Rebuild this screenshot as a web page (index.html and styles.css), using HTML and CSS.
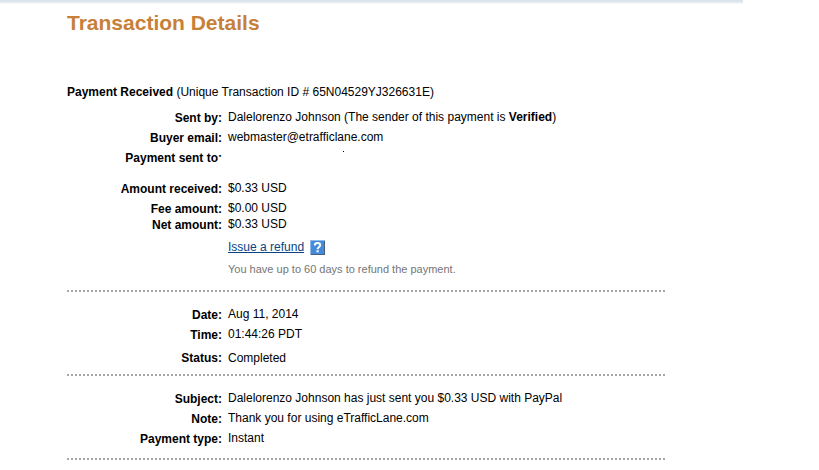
FILE: index.html
```html
<!DOCTYPE html>
<html lang="en">
<head>
<meta charset="utf-8">
<title>Transaction Details</title>
<link rel="stylesheet" href="styles.css">
</head>
<body>
<div class="page">
  <main class="content">
    <h1>Transaction Details</h1>
    <p class="summary"><strong>Payment Received</strong> (Unique Transaction ID # 65N04529YJ326631E)</p>

    <section class="block payment">
      <dl>
        <div class="row"><dt>Sent by:</dt><dd>Dalelorenzo Johnson (The sender of this payment is <strong>Verified</strong>)</dd></div>
        <div class="row"><dt>Buyer email:</dt><dd>webmaster@etrafficlane.com</dd></div>
        <div class="row redacted"><dt>Payment sent to:</dt><dd><span class="speck"></span></dd></div>
      </dl>
      <dl class="amounts">
        <div class="row"><dt>Amount received:</dt><dd>$0.33 USD</dd></div>
        <div class="row"><dt>Fee amount:</dt><dd>$0.00 USD</dd></div>
        <div class="row tight"><dt>Net amount:</dt><dd>$0.33 USD</dd></div>
      </dl>
      <div class="refund">
        <p class="refund-action">
          <a href="#refund">Issue a refund</a>
          <button class="help" type="button" aria-label="Help">
            <svg viewBox="0 0 15 15" width="15" height="15" aria-hidden="true">
              <rect width="15" height="15" fill="#8fb9e6"/>
              <rect x="1" y="1" width="14" height="14" fill="#4a5f78"/>
              <rect x="1" y="1" width="13" height="13" fill="#448cdb"/>
              <path d="M4.8 5.4C4.8 3.6 6 3 7.5 3S10.2 3.7 10.2 5.2C10.2 6.9 7.6 7 7.6 9.2" fill="none" stroke="#fff" stroke-width="2"/>
              <rect x="6.5" y="10.3" width="2.2" height="2" fill="#fff"/>
            </svg>
          </button>
        </p>
        <p class="hint">You have up to 60 days to refund the payment.</p>
      </div>
    </section>

    <section class="block">
      <dl>
        <div class="row"><dt>Date:</dt><dd>Aug 11, 2014</dd></div>
        <div class="row"><dt>Time:</dt><dd>01:44:26 PDT</dd></div>
        <div class="row status"><dt>Status:</dt><dd>Completed</dd></div>
      </dl>
    </section>

    <section class="block message">
      <dl>
        <div class="row"><dt>Subject:</dt><dd>Dalelorenzo Johnson has just sent you $0.33 USD with PayPal</dd></div>
        <div class="row"><dt>Note:</dt><dd>Thank you for using eTrafficLane.com</dd></div>
        <div class="row"><dt>Payment type:</dt><dd>Instant</dd></div>
      </dl>
    </section>
  </main>
</div>
</body>
</html>
```
FILE: styles.css
```css
* {
  box-sizing: border-box;
}

body {
  margin: 0;
  background: #fff;
  color: #000;
  font: 12px/16px "Liberation Sans", Arial, sans-serif;
}

h1, p, dl, dd {
  margin: 0;
}

.page {
  max-width: 743px;
  background: linear-gradient(#d8e2eb, #dfe8ef 2px, #fff 4px) no-repeat top / 100% 4px;
}

.content {
  max-width: 667px;
  padding: 11px 0 10px 67px;
}

h1 {
  color: #c88039;
  font-size: 21px;
  line-height: 24px;
}

.summary {
  margin-top: 49px;
}

.block {
  padding: 14px 0 10px;
  background: repeating-linear-gradient(90deg, #a5a5a5 0 2px, transparent 2px 4px) no-repeat bottom / 100% 2px;
}

.payment {
  padding: 9px 0 15px;
}

.message {
  padding-bottom: 14px;
}

.row {
  display: flex;
  gap: 6px;
}

.row + .row {
  margin-top: 4px;
}

.row + .tight {
  margin-top: 0;
}

.row + .status {
  margin-top: 8px;
}

dt {
  flex: 0 0 155px;
  height: 16px;
  padding-top: 1px;
  font-weight: bold;
  text-align: right;
}

dd {
  flex: 1;
}

.status dt {
  padding-top: 0;
}

.redacted dt {
  position: relative;
}

.redacted dt::after {
  content: "";
  position: absolute;
  right: 0;
  bottom: 0;
  width: 4px;
  height: 7px;
  background: #fff;
}

.redacted dd {
  padding-left: 115px;
}

.speck {
  display: block;
  width: 1px;
  height: 1px;
  margin-top: 2px;
  background: #000;
}

.amounts {
  margin-top: 15px;
}

.refund {
  margin: 7px 0 0 161px;
}

.refund-action {
  display: flex;
  align-items: center;
  gap: 6px;
}

.refund a {
  color: #084482;
}

.help {
  display: flex;
  padding: 0;
  border: 0;
  background: none;
}

.hint {
  margin-top: 6px;
  color: #757575;
  font-size: 11px;
}
```
